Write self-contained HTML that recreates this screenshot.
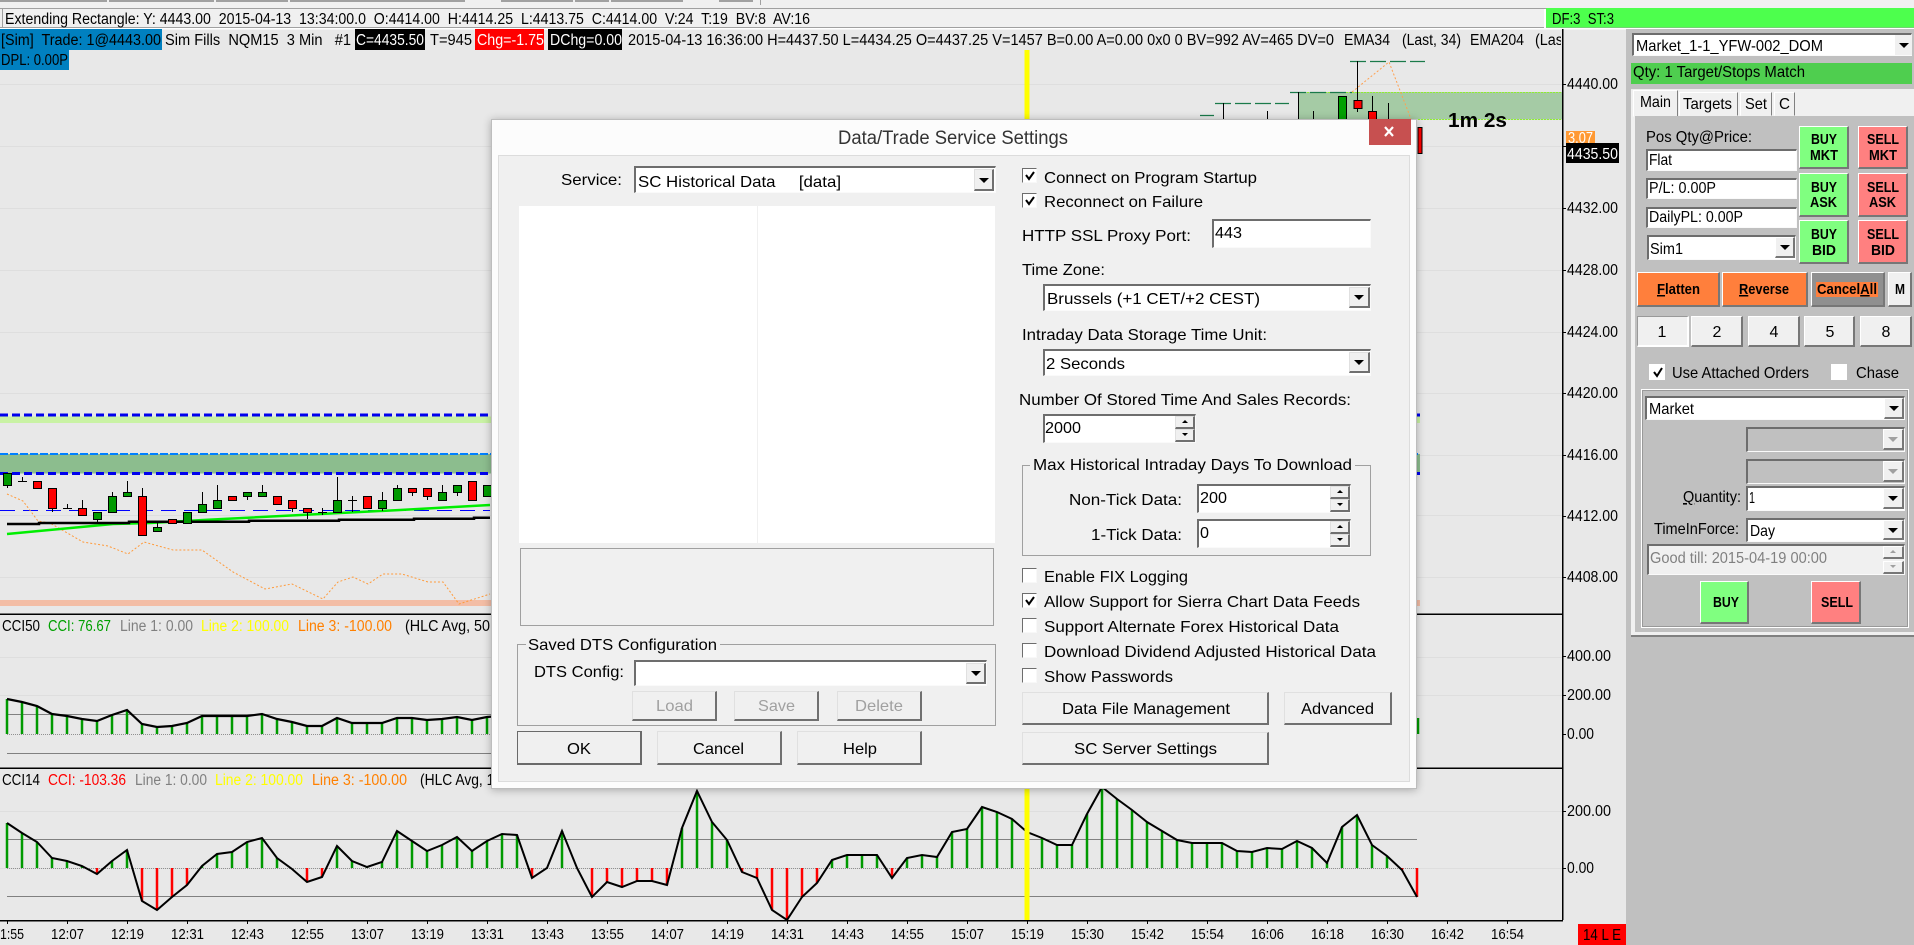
<!DOCTYPE html>
<html><head><meta charset="utf-8"><title>Data/Trade Service Settings</title>
<style>
html,body{margin:0;padding:0;width:1914px;height:945px;overflow:hidden;background:#e8e8e8;font-family:"Liberation Sans",Arial,sans-serif}
svg{position:absolute;left:0;top:0}
svg text{font-family:"Liberation Sans",Arial,sans-serif;white-space:pre}
.d{position:absolute;box-sizing:border-box}
.s{position:absolute;box-sizing:border-box;background:#fff;border-style:solid;border-width:2px 1px 1px 2px;border-color:#6d6d6d #fafafa #fafafa #6d6d6d}
.b{position:absolute;box-sizing:border-box;background:#f0f0f0;border-style:solid;border-width:1px 2px 2px 1px;border-color:#e0e0e0 #707070 #707070 #e0e0e0}
.p{position:absolute;box-sizing:border-box;background:#f0f0f0;border-style:solid;border-width:1px 2px 2px 1px;border-color:#fff #777 #777 #fff}
.a:after,.g:after{content:"";position:absolute;left:50%;top:50%;margin:-2px 0 0 -5px;border-left:5px solid transparent;border-right:5px solid transparent;border-top:5px solid #000}
.g:after{border-top-color:#a0a0a0}
.u:after,.v:after{content:"";position:absolute;left:50%;top:50%;margin:-2px 0 0 -3px;border-left:3px solid transparent;border-right:3px solid transparent}
.u:after{border-bottom:3px solid #000}
.v:after{border-top:3px solid #000}
.gr:after{border-bottom-color:#a0a0a0;border-top-color:#a0a0a0}
.c{position:absolute;box-sizing:border-box;width:15px;height:15px;background:#fff;border-style:solid;border-width:1px;border-color:#6d6d6d #f8f8f8 #f8f8f8 #6d6d6d}
.buy{background:#80ff80}.sell{background:#ff8080}
.o{background:#ff7f3c}
</style></head><body>

<svg width="1914" height="945" viewBox="0 0 1914 945">
<defs><clipPath id="cl"><rect x="0" y="29" width="1561" height="60"/></clipPath></defs>
<rect width="1914" height="945" fill="#e8e8e8"/>
<!-- top strip -->
<rect width="1914" height="8" fill="#f0f0f0"/>
<g fill="#a0a0a0"><rect x="0" width="107" height="2"/><rect x="109" width="105" height="2"/><rect x="216" width="72" height="2"/><rect x="290" width="175" height="2"/><rect x="501" width="72" height="2"/><rect x="575" width="34" height="2"/><rect x="611" width="72" height="2"/><rect x="719" width="34" height="2"/><rect x="760" width="1" height="5"/></g>
<rect x="0" y="8" width="1914" height="1" fill="#a0a0a0"/>
<rect x="0" y="9" width="1914" height="18" fill="#f0f0f0"/>
<rect x="2" y="9" width="1" height="18" fill="#a0a0a0"/>
<rect x="0" y="27" width="1914" height="1" fill="#a0a0a0"/>
<rect x="0" y="28" width="1914" height="1.5" fill="#fff"/>
<rect x="1546" y="8" width="368" height="19.5" fill="#4dff4d"/>
<rect x="1544" y="9" width="2" height="19" fill="#fff"/>
<rect x="1626" y="29" width="288" height="916" fill="#c0c0c0"/>
<!-- grid -->
<path d="M0 84.5H1562M0 146.5H1562M0 208.5H1562M0 270.5H1562M0 332.5H1562M0 393.5H1562M0 455.5H1562M0 515.5H1562M0 577.5H1562M0 657.5H1562M0 695.5H1562M0 811.5H1562M0 868.5H1562" stroke="#dedede" stroke-width="1" fill="none"/>
<!-- zones -->
<rect x="0" y="416.5" width="1420" height="6.5" fill="#c9f2a4"/>
<rect x="0" y="454" width="1420" height="19.5" fill="#8cbd8e"/>
<rect x="0" y="600" width="1420" height="6" fill="#f3bda5"/>
<path d="M0 415H1420M0 473.5H1420" stroke="#0000ee" stroke-width="3" stroke-dasharray="8 4" fill="none"/>
<path d="M0 454H1420" stroke="#0080ff" stroke-width="2" stroke-dasharray="8 2" fill="none"/>
<path d="M0 510.5H490" stroke="#0000ff" stroke-width="1" stroke-dasharray="15 8" fill="none"/>
<!-- top right band -->
<rect x="1298" y="92" width="264" height="27.5" fill="#a5cba5"/>
<path d="M1298 92.5H1562M1298 119.5H1562" stroke="#90ee30" stroke-width="1" stroke-dasharray="2 1" fill="none"/>
<path d="M1350 61.5H1425M1290 92.5H1352M1215 103.5H1289M1200 115.5H1214" stroke="#1a7a4a" stroke-width="1.3" stroke-dasharray="16 4" fill="none"/>
<path d="M1223.5 103V119M1267.5 111V119M1298.5 92V119M1313.5 111V119M1357.5 61V112M1372.5 96V119M1388.5 103V119" stroke="#000" stroke-width="1" fill="none"/>
<rect x="1338.5" y="96.5" width="8" height="24" fill="#00a000" stroke="#000"/>
<rect x="1354" y="100.5" width="8" height="8" fill="#f00" stroke="#000"/>
<rect x="1368.5" y="111.5" width="8" height="12" fill="#f00" stroke="#000"/>
<polyline points="1352,92 1389,62 1411,119" fill="none" stroke="#ffa050" stroke-width="1" stroke-dasharray="2 2"/>
<rect x="1418" y="127.5" width="4" height="26" fill="#f00" stroke="#000"/>
<!-- yellow + chart lines -->
<polyline points="7,494 23,501 38,521 50,523 83,542 108,546 128,554 144,542 173,550 202,550 233,572 265,589 292,584 323,599 338,582 353,577 368,584 383,574 402,574 428,582 443,582 459,604 490,594" fill="none" stroke="#ff9a3a" stroke-width="1" stroke-dasharray="2 2"/>
<polyline points="7,534 113,524 150,523 203,520 400,510 490,505" fill="none" stroke="#00ee00" stroke-width="2.5"/>
<path d="M7 524H39V523H129V521.7H249V520.7H339V519.7H414V518.7H474V517.7H490" fill="none" stroke="#000" stroke-width="2.5"/>
<!-- candles -->
<path d="M7.5 485V488M22.5 477V482M18 481.5H27M52.5 508V512M67.5 504V509M63 508.5H72M82.5 500V509M97.5 519V522M112.5 492V497M127.5 481V493M142.5 488V497M157.5 523V528M202.5 492V505M217.5 485V501M247.5 496V500M262.5 485V493M292.5 508V512M307.5 512V519M322.5 508V515M318 512.5H327M337.5 477V501M352.5 496V512M348 500.5H357M382.5 492V511M397.5 485V489M412.5 492V496M427.5 496V500M442.5 485V493M457.5 492V496" stroke="#000" stroke-width="1" fill="none"/>
<path d="M3.5 473.5h8v12h-8zM93.5 512.5h8v7h-8zM108.5 496.5h8v16h-8zM123.5 492.5h8v4h-8zM153.5 527.5h8v4h-8zM183.5 512.5h8v11h-8zM198.5 504.5h8v8h-8zM213.5 500.5h8v8h-8zM243.5 492.5h8v4h-8zM258.5 492.5h8v4h-8zM333.5 500.5h8v12h-8zM378.5 500.5h8v8h-8zM393.5 488.5h8v12h-8zM438.5 492.5h8v8h-8zM453.5 485.5h8v7h-8zM483.5 485.5h8v11h-8z" fill="#009a00" stroke="#000"/>
<path d="M33.5 481.5h8v7h-8zM48.5 488.5h8v20h-8zM78.5 508.5h8v7h-8zM138.5 496.5h8v39h-8zM168.5 519.5h8v4h-8zM228.5 496.5h8v4h-8zM273.5 496.5h8v8h-8zM288.5 500.5h8v8h-8zM303.5 508.5h8v4h-8zM363.5 496.5h8v12h-8zM408.5 488.5h8v4h-8zM423.5 488.5h8v8h-8zM468.5 481.5h8v19h-8z" fill="#f00" stroke="#000"/>
<!-- separators -->
<rect x="0" y="613.5" width="1562" height="1.5" fill="#000"/>
<rect x="0" y="767.5" width="1562" height="1.5" fill="#000"/>
<rect x="1562" y="29" width="1.5" height="891" fill="#000"/>
<rect x="0" y="920" width="1563" height="1.5" fill="#000"/>
<!-- CCI50 -->
<path d="M7 714.5H1417M7 753.5H1417" stroke="#808080" stroke-width="1" fill="none"/>
<path d="M7 734.5H1417" stroke="#909090" stroke-width="1" stroke-dasharray="1 1" fill="none"/>
<path d="M7 734V699M22 734V702M37 734V706M52 734V714M67 734V716M82 734V719M97 734V721M112 734V715M127 734V710M142 734V724M157 734V727M172 734V726M187 734V723M202 734V716M217 734V716M232 734V716M247 734V716M262 734V714M277 734V719M292 734V722M307 734V726M322 734V726M337 734V718M352 734V723M367 734V723M382 734V723M397 734V718M412 734V718M427 734V720M442 734V719M457 734V717M472 734V720M487 734V717M1418 734V718" stroke="#009a00" stroke-width="2.5" fill="none"/>
<polyline points="7,699 22,702 37,706 52,714 67,716 82,719 97,721 112,715 127,710 142,724 157,727 172,726 187,723 202,716 217,716 232,716 247,716 262,714 277,719 292,722 307,726 322,726 337,718 352,723 367,723 382,723 397,718 412,718 427,720 442,719 457,717 472,720 487,717 500,716" fill="none" stroke="#000" stroke-width="2.2"/>
<!-- CCI14 -->
<path d="M7 839.5H1417M7 896.5H1417" stroke="#808080" stroke-width="1" fill="none"/>
<path d="M7 868.5H1417" stroke="#909090" stroke-width="1" stroke-dasharray="1 1" fill="none"/>
<path d="M7 868V823M22 868V833M37 868V842M52 868V858M67 868V861M82 868V866M112 868V861M127 868V850M202 868V866M217 868V854M232 868V852M247 868V842M262 868V838M277 868V858M337 868V846M352 868V861M367 868V867M382 868V862M397 868V831M412 868V841M427 868V851M442 868V845M457 868V837M472 868V851M487 868V841M502 868V834M517 868V835M562 868V831M682 868V828M697 868V791M712 868V822M727 868V840M832 868V860M847 868V855M862 868V855M877 868V855M907 868V858M922 868V855M937 868V857M952 868V832M967 868V829M982 868V807M997 868V812M1012 868V819M1027 868V832M1042 868V838M1057 868V845M1072 868V845M1087 868V814M1102 868V787M1117 868V799M1132 868V810M1147 868V822M1162 868V831M1177 868V840M1192 868V843M1207 868V843M1222 868V843M1237 868V851M1252 868V852M1267 868V848M1282 868V849M1297 868V841M1312 868V848M1327 868V863M1342 868V827M1357 868V815M1372 868V845M1387 868V856" stroke="#009a00" stroke-width="2.5" fill="none"/>
<path d="M97 868V874M142 868V901M157 868V910M172 868V897M187 868V885M307 868V882M322 868V877M532 868V878M592 868V897M607 868V882M622 868V887M637 868V881M652 868V881M667 868V885M742 868V872M757 868V878M772 868V910M787 868V920M802 868V897M817 868V883M892 868V878M1402 868V870M1417 868V897" stroke="#f00" stroke-width="2.5" fill="none"/>
<polyline points="7,823 22,833 37,842 52,858 67,861 82,866 97,874 112,861 127,850 142,901 157,910 172,897 187,885 202,866 217,854 232,852 247,842 262,838 277,858 292,869 307,882 322,877 337,846 352,861 367,867 382,862 397,831 412,841 427,851 442,845 457,837 472,851 487,841 502,834 517,835 532,878 547,868 562,831 577,868 592,897 607,882 622,887 637,881 652,881 667,885 682,828 697,791 712,822 727,840 742,872 757,878 772,910 787,920 802,897 817,883 832,860 847,855 862,855 877,855 892,878 907,858 922,855 937,857 952,832 967,829 982,807 997,812 1012,819 1027,832 1042,838 1057,845 1072,845 1087,814 1102,787 1117,799 1132,810 1147,822 1162,831 1177,840 1192,843 1207,843 1222,843 1237,851 1252,852 1267,848 1282,849 1297,841 1312,848 1327,863 1342,827 1357,815 1372,845 1387,856 1402,870 1417,897" fill="none" stroke="#000" stroke-width="2"/>
<rect x="1024.5" y="50" width="5" height="870" fill="#ffff00"/>
<!-- ticks -->
<path d="M7.5 921V924M67.5 921V924M127.5 921V924M187.5 921V924M247.5 921V924M307.5 921V924M367.5 921V924M427.5 921V924M487.5 921V924M547.5 921V924M607.5 921V924M667.5 921V924M727.5 921V924M787.5 921V924M847.5 921V924M907.5 921V924M967.5 921V924M1027.5 921V924M1087.5 921V924M1147.5 921V924M1207.5 921V924M1267.5 921V924M1327.5 921V924M1387.5 921V924M1447.5 921V924M1507.5 921V924M1563 84.5H1566M1563 146.5H1566M1563 208.5H1566M1563 270.5H1566M1563 332.5H1566M1563 393.5H1566M1563 455.5H1566M1563 516.5H1566M1563 577.5H1566M1563 656.5H1566M1563 695.5H1566M1563 734.5H1566M1563 811.5H1566M1563 868.5H1566" stroke="#000" stroke-width="1"/>
<!-- header texts -->
<rect x="0" y="29" width="162" height="21" fill="#0080c0"/>
<rect x="0" y="50" width="69" height="20" fill="#0080c0"/>
<rect x="355" y="29" width="70" height="21" fill="#000"/>
<rect x="475" y="29" width="69" height="21" fill="#f00"/>
<rect x="548" y="29" width="74" height="21" fill="#000"/>
<g font-size="15.5" fill="#000">
<text x="5" y="24" textLength="805" lengthAdjust="spacingAndGlyphs">Extending Rectangle: Y: 4443.00  2015-04-13  13:34:00.0  O:4414.00  H:4414.25  L:4413.75  C:4414.00  V:24  T:19  BV:8  AV:16</text>
<text x="1552" y="24" textLength="62" lengthAdjust="spacingAndGlyphs">DF:3  ST:3</text>
<text x="1" y="45" textLength="160" lengthAdjust="spacingAndGlyphs">[Sim]  Trade: 1@4443.00</text>
<text x="165" y="45" textLength="186" lengthAdjust="spacingAndGlyphs">Sim Fills  NQM15  3 Min   #1</text>
<text x="356" y="45" textLength="68" lengthAdjust="spacingAndGlyphs" fill="#fff">C=4435.50</text>
<text x="430" y="45" textLength="42" lengthAdjust="spacingAndGlyphs">T=945</text>
<text x="477" y="45" textLength="67" lengthAdjust="spacingAndGlyphs" fill="#fff">Chg=-1.75</text>
<text x="550" y="45" textLength="72" lengthAdjust="spacingAndGlyphs" fill="#fff">DChg=0.00</text>
<text x="628" y="45" textLength="706" lengthAdjust="spacingAndGlyphs">2015-04-13 16:36:00 H=4437.50 L=4434.25 O=4437.25 V=1457 B=0.00 A=0.00 0x0 0 BV=992 AV=465 DV=0</text>
<text x="1344" y="45" textLength="46" lengthAdjust="spacingAndGlyphs">EMA34</text>
<text x="1402" y="45" textLength="59" lengthAdjust="spacingAndGlyphs">(Last, 34)</text>
<text x="1470" y="45" textLength="54" lengthAdjust="spacingAndGlyphs">EMA204</text>
<text x="1535" y="45" textLength="32" lengthAdjust="spacingAndGlyphs" clip-path="url(#cl)">(Last</text>
<text x="1" y="65" textLength="67" lengthAdjust="spacingAndGlyphs">DPL: 0.00P</text>
<!-- study labels -->
<text x="2" y="631" textLength="38" lengthAdjust="spacingAndGlyphs">CCI50</text>
<text x="48" y="631" textLength="63" lengthAdjust="spacingAndGlyphs" fill="#00a000">CCI: 76.67</text>
<text x="120" y="631" textLength="73" lengthAdjust="spacingAndGlyphs" fill="#808080">Line 1: 0.00</text>
<text x="201" y="631" textLength="88" lengthAdjust="spacingAndGlyphs" fill="#ffff00">Line 2: 100.00</text>
<text x="298" y="631" textLength="94" lengthAdjust="spacingAndGlyphs" fill="#ff8000">Line 3: -100.00</text>
<text x="405" y="631" textLength="85" lengthAdjust="spacingAndGlyphs">(HLC Avg, 50</text>
<text x="2" y="785" textLength="38" lengthAdjust="spacingAndGlyphs">CCI14</text>
<text x="48" y="785" textLength="78" lengthAdjust="spacingAndGlyphs" fill="#f00">CCI: -103.36</text>
<text x="135" y="785" textLength="72" lengthAdjust="spacingAndGlyphs" fill="#808080">Line 1: 0.00</text>
<text x="215" y="785" textLength="88" lengthAdjust="spacingAndGlyphs" fill="#ffff00">Line 2: 100.00</text>
<text x="312" y="785" textLength="95" lengthAdjust="spacingAndGlyphs" fill="#ff8000">Line 3: -100.00</text>
<text x="420" y="785" textLength="82" lengthAdjust="spacingAndGlyphs">(HLC Avg, 14</text>
<!-- axis -->
<text x="1567" y="89" textLength="51" lengthAdjust="spacingAndGlyphs">4440.00</text>
<text x="1567" y="213" textLength="51" lengthAdjust="spacingAndGlyphs">4432.00</text>
<text x="1567" y="275" textLength="51" lengthAdjust="spacingAndGlyphs">4428.00</text>
<text x="1567" y="337" textLength="51" lengthAdjust="spacingAndGlyphs">4424.00</text>
<text x="1567" y="398" textLength="51" lengthAdjust="spacingAndGlyphs">4420.00</text>
<text x="1567" y="460" textLength="51" lengthAdjust="spacingAndGlyphs">4416.00</text>
<text x="1567" y="521" textLength="51" lengthAdjust="spacingAndGlyphs">4412.00</text>
<text x="1567" y="582" textLength="51" lengthAdjust="spacingAndGlyphs">4408.00</text>
<text x="1567" y="661" textLength="44" lengthAdjust="spacingAndGlyphs">400.00</text>
<text x="1567" y="700" textLength="44" lengthAdjust="spacingAndGlyphs">200.00</text>
<text x="1567" y="739" textLength="27" lengthAdjust="spacingAndGlyphs">0.00</text>
<text x="1567" y="816" textLength="44" lengthAdjust="spacingAndGlyphs">200.00</text>
<text x="1567" y="873" textLength="27" lengthAdjust="spacingAndGlyphs">0.00</text>
</g>
<rect x="1566" y="131" width="29" height="13" fill="#ff9933"/>
<text x="1568" y="143" font-size="15.5" fill="#fff" textLength="25" lengthAdjust="spacingAndGlyphs">3.07</text>
<rect x="1566" y="143" width="53" height="20" fill="#000"/>
<text x="1567" y="159" font-size="15.5" fill="#fff" textLength="51" lengthAdjust="spacingAndGlyphs">4435.50</text>
<text x="1448" y="127" font-size="20" font-weight="bold" fill="#000" textLength="59" lengthAdjust="spacingAndGlyphs">1m 2s</text>
<!-- time axis -->
<g font-size="15" fill="#000">
<text x="0" y="939" textLength="24" lengthAdjust="spacingAndGlyphs">1:55</text>
<text x="51" y="939" textLength="33" lengthAdjust="spacingAndGlyphs">12:07</text>
<text x="111" y="939" textLength="33" lengthAdjust="spacingAndGlyphs">12:19</text>
<text x="171" y="939" textLength="33" lengthAdjust="spacingAndGlyphs">12:31</text>
<text x="231" y="939" textLength="33" lengthAdjust="spacingAndGlyphs">12:43</text>
<text x="291" y="939" textLength="33" lengthAdjust="spacingAndGlyphs">12:55</text>
<text x="351" y="939" textLength="33" lengthAdjust="spacingAndGlyphs">13:07</text>
<text x="411" y="939" textLength="33" lengthAdjust="spacingAndGlyphs">13:19</text>
<text x="471" y="939" textLength="33" lengthAdjust="spacingAndGlyphs">13:31</text>
<text x="531" y="939" textLength="33" lengthAdjust="spacingAndGlyphs">13:43</text>
<text x="591" y="939" textLength="33" lengthAdjust="spacingAndGlyphs">13:55</text>
<text x="651" y="939" textLength="33" lengthAdjust="spacingAndGlyphs">14:07</text>
<text x="711" y="939" textLength="33" lengthAdjust="spacingAndGlyphs">14:19</text>
<text x="771" y="939" textLength="33" lengthAdjust="spacingAndGlyphs">14:31</text>
<text x="831" y="939" textLength="33" lengthAdjust="spacingAndGlyphs">14:43</text>
<text x="891" y="939" textLength="33" lengthAdjust="spacingAndGlyphs">14:55</text>
<text x="951" y="939" textLength="33" lengthAdjust="spacingAndGlyphs">15:07</text>
<text x="1011" y="939" textLength="33" lengthAdjust="spacingAndGlyphs">15:19</text>
<text x="1071" y="939" textLength="33" lengthAdjust="spacingAndGlyphs">15:30</text>
<text x="1131" y="939" textLength="33" lengthAdjust="spacingAndGlyphs">15:42</text>
<text x="1191" y="939" textLength="33" lengthAdjust="spacingAndGlyphs">15:54</text>
<text x="1251" y="939" textLength="33" lengthAdjust="spacingAndGlyphs">16:06</text>
<text x="1311" y="939" textLength="33" lengthAdjust="spacingAndGlyphs">16:18</text>
<text x="1371" y="939" textLength="33" lengthAdjust="spacingAndGlyphs">16:30</text>
<text x="1431" y="939" textLength="33" lengthAdjust="spacingAndGlyphs">16:42</text>
<text x="1491" y="939" textLength="33" lengthAdjust="spacingAndGlyphs">16:54</text>
</g>
<rect x="1578" y="924" width="48" height="21" fill="#f00"/>
<text x="1583" y="940" font-size="15.5" fill="#000" textLength="38" lengthAdjust="spacingAndGlyphs">14 L E</text>
</svg>

<!-- DIALOG -->
<div class="d" style="left:491px;top:119px;width:926px;height:670px;background:#fcfcfc;border:1px solid #bdbdbd;box-shadow:0 1px 8px rgba(0,0,0,.28)"></div>
<div class="d" style="left:1369px;top:119px;width:42px;height:26px;background:#c75050"></div>
<div class="d" style="left:498px;top:155px;width:912px;height:627px;background:#f0f0f0;border:1px solid #dcdcdc"></div>
<div class="s" style="left:634px;top:166px;width:362px;height:27px"></div>
<div class="b a" style="left:974px;top:169px;width:20px;height:22px"></div>
<div class="d" style="left:519px;top:206px;width:476px;height:337px;background:#fff"></div>
<div class="d" style="left:757px;top:206px;width:1px;height:337px;background:#f0f0f0"></div>
<div class="d" style="left:520px;top:548px;width:474px;height:78px;border:1px solid #a0a0a0"></div>
<div class="d" style="left:517px;top:644px;width:479px;height:82px;border:1px solid #a0a0a0"></div>
<div class="d" style="left:526px;top:640px;width:194px;height:10px;background:#f0f0f0"></div>
<div class="s" style="left:634px;top:660px;width:353px;height:26px"></div>
<div class="b a" style="left:966px;top:663px;width:20px;height:21px"></div>
<div class="b" style="left:632px;top:691px;width:85px;height:30px"></div>
<div class="b" style="left:734px;top:691px;width:85px;height:30px"></div>
<div class="b" style="left:837px;top:691px;width:85px;height:30px"></div>
<div class="b" style="left:517px;top:731px;width:125px;height:34px;border-width:1px 2px 2px 1px;border-color:#6a6a6a"></div>
<div class="b" style="left:657px;top:731px;width:125px;height:34px"></div>
<div class="b" style="left:797px;top:731px;width:125px;height:34px"></div>
<div class="c" style="left:1022px;top:168px"></div>
<div class="c" style="left:1022px;top:193px"></div>
<div class="s" style="left:1212px;top:219px;width:159px;height:29px"></div>
<div class="s" style="left:1043px;top:284px;width:328px;height:27px"></div>
<div class="b a" style="left:1349px;top:287px;width:21px;height:21px"></div>
<div class="s" style="left:1043px;top:349px;width:328px;height:27px"></div>
<div class="b a" style="left:1349px;top:352px;width:21px;height:21px"></div>
<div class="s" style="left:1043px;top:414px;width:153px;height:29px"></div>
<div class="b u" style="left:1175px;top:416px;width:20px;height:13px"></div>
<div class="b v" style="left:1175px;top:429px;width:20px;height:13px"></div>
<div class="d" style="left:1022px;top:465px;width:349px;height:91px;border:1px solid #a0a0a0"></div>
<div class="d" style="left:1030px;top:460px;width:325px;height:10px;background:#f0f0f0"></div>
<div class="s" style="left:1197px;top:484px;width:154px;height:29px"></div>
<div class="b u" style="left:1330px;top:486px;width:20px;height:13px"></div>
<div class="b v" style="left:1330px;top:499px;width:20px;height:13px"></div>
<div class="s" style="left:1197px;top:519px;width:154px;height:29px"></div>
<div class="b u" style="left:1330px;top:521px;width:20px;height:13px"></div>
<div class="b v" style="left:1330px;top:534px;width:20px;height:13px"></div>
<div class="c" style="left:1022px;top:568px"></div>
<div class="c" style="left:1022px;top:593px"></div>
<div class="c" style="left:1022px;top:618px"></div>
<div class="c" style="left:1022px;top:643px"></div>
<div class="c" style="left:1022px;top:668px"></div>
<div class="b" style="left:1022px;top:692px;width:247px;height:33px"></div>
<div class="b" style="left:1284px;top:692px;width:108px;height:33px"></div>
<div class="b" style="left:1022px;top:732px;width:247px;height:33px"></div>

<!-- RIGHT PANEL -->
<div class="s" style="left:1632px;top:33px;width:280px;height:23px"></div>
<div class="d a" style="left:1895px;top:35px;width:17px;height:20px;background:#f0f0f0"></div>
<div class="d" style="left:1631px;top:63px;width:281px;height:21px;background:#4fce4f"></div>
<div class="d" style="left:1631px;top:89px;width:283px;height:548px;background:#f0f0f0;border-bottom:2px solid #808080"></div>
<div class="d" style="left:1633px;top:90px;width:45px;height:27px;background:#f0f0f0;border:1px solid;border-color:#fff #808080 #f0f0f0 #fff"></div>
<div class="d" style="left:1679px;top:92px;width:59px;height:24px;background:#f0f0f0;border:1px solid;border-color:#fff #808080 #f0f0f0 #fff"></div>
<div class="d" style="left:1740px;top:92px;width:32px;height:24px;background:#f0f0f0;border:1px solid;border-color:#fff #808080 #f0f0f0 #fff"></div>
<div class="d" style="left:1774px;top:92px;width:21px;height:24px;background:#f0f0f0;border:1px solid;border-color:#fff #808080 #f0f0f0 #fff"></div>
<div class="d" style="left:1635px;top:116px;width:279px;height:516px;background:#c0c0c0"></div>
<div class="s" style="left:1646px;top:149px;width:151px;height:22px"></div>
<div class="s" style="left:1646px;top:178px;width:151px;height:21px"></div>
<div class="s" style="left:1646px;top:207px;width:151px;height:21px"></div>
<div class="s" style="left:1647px;top:235px;width:149px;height:25px"></div>
<div class="p a" style="left:1775px;top:237px;width:20px;height:21px"></div>
<div class="p buy" style="left:1799px;top:126px;width:50px;height:43px"></div>
<div class="p sell" style="left:1858px;top:126px;width:50px;height:43px"></div>
<div class="p buy" style="left:1799px;top:173px;width:50px;height:44px"></div>
<div class="p sell" style="left:1858px;top:173px;width:50px;height:44px"></div>
<div class="p buy" style="left:1799px;top:220px;width:50px;height:44px"></div>
<div class="p sell" style="left:1858px;top:220px;width:50px;height:44px"></div>
<div class="p o" style="left:1637px;top:272px;width:83px;height:35px"></div>
<div class="p o" style="left:1722px;top:272px;width:86px;height:35px"></div>
<div class="p" style="left:1811px;top:272px;width:74px;height:35px;background:#909090"></div>
<div class="d o" style="left:1816px;top:282px;width:62px;height:15px"></div>
<div class="p" style="left:1888px;top:272px;width:24px;height:35px"></div>
<div class="p" style="left:1637px;top:316px;width:52px;height:31px;border-color:#999 #fff #fff #999"></div>
<div class="p" style="left:1691px;top:316px;width:52px;height:31px"></div>
<div class="p" style="left:1748px;top:316px;width:52px;height:31px"></div>
<div class="p" style="left:1804px;top:316px;width:51px;height:31px"></div>
<div class="p" style="left:1860px;top:316px;width:52px;height:31px"></div>
<div class="c" style="left:1649px;top:364px;width:16px;height:16px;border-color:#fff"></div>
<div class="c" style="left:1831px;top:364px;width:16px;height:16px;border-color:#fff"></div>
<div class="d" style="left:1641px;top:389px;width:268px;height:239px;border:1px solid #fff;outline:1px solid #999;outline-offset:-2px"></div>
<div class="s" style="left:1645px;top:396px;width:260px;height:24px"></div>
<div class="p a" style="left:1884px;top:398px;width:20px;height:21px"></div>
<div class="s" style="left:1746px;top:427px;width:159px;height:25px;background:#c0c0c0"></div>
<div class="p g" style="left:1883px;top:429px;width:21px;height:21px"></div>
<div class="s" style="left:1746px;top:459px;width:159px;height:25px;background:#c0c0c0"></div>
<div class="p g" style="left:1883px;top:461px;width:21px;height:21px"></div>
<div class="s" style="left:1746px;top:486px;width:159px;height:25px"></div>
<div class="p a" style="left:1883px;top:488px;width:21px;height:21px"></div>
<div class="s" style="left:1746px;top:518px;width:159px;height:24px"></div>
<div class="p a" style="left:1883px;top:520px;width:21px;height:20px"></div>
<div class="s" style="left:1647px;top:544px;width:258px;height:31px;background:#f0f0f0"></div>
<div class="p u gr" style="left:1883px;top:546px;width:21px;height:13px"></div>
<div class="p v gr" style="left:1883px;top:561px;width:21px;height:13px"></div>
<div class="p buy" style="left:1700px;top:581px;width:49px;height:43px"></div>
<div class="p sell" style="left:1811px;top:581px;width:50px;height:43px"></div>

<!-- TEXT OVERLAY -->
<svg width="1914" height="945" viewBox="0 0 1914 945" style="pointer-events:none">
<path d="M1385 127L1393 136M1393 127L1385 136" stroke="#fff" stroke-width="2.2" fill="none"/>
<g fill="none" stroke="#000" stroke-width="2">
<polyline points="1026,175 1029,179 1034,172"/>
<polyline points="1026,200 1029,204 1034,197"/>
<polyline points="1026,600 1029,604 1034,597"/>
<polyline points="1654,372 1657,376 1662,368"/>
</g>
<text x="838" y="144" font-size="19" fill="#333" textLength="230" lengthAdjust="spacingAndGlyphs">Data/Trade Service Settings</text>
<g font-size="16" fill="#000">
<text x="561" y="185" textLength="61" lengthAdjust="spacingAndGlyphs">Service:</text>
<text x="638" y="187" textLength="203" lengthAdjust="spacingAndGlyphs">SC Historical Data     [data]</text>
<text x="1044" y="183" textLength="213" lengthAdjust="spacingAndGlyphs">Connect on Program Startup</text>
<text x="1044" y="207" textLength="159" lengthAdjust="spacingAndGlyphs">Reconnect on Failure</text>
<text x="1022" y="241" textLength="169" lengthAdjust="spacingAndGlyphs">HTTP SSL Proxy Port:</text>
<text x="1215" y="238" textLength="27" lengthAdjust="spacingAndGlyphs">443</text>
<text x="1022" y="275" textLength="83" lengthAdjust="spacingAndGlyphs">Time Zone:</text>
<text x="1047" y="304" textLength="213" lengthAdjust="spacingAndGlyphs">Brussels (+1 CET/+2 CEST)</text>
<text x="1022" y="340" textLength="245" lengthAdjust="spacingAndGlyphs">Intraday Data Storage Time Unit:</text>
<text x="1046" y="369" textLength="79" lengthAdjust="spacingAndGlyphs">2 Seconds</text>
<text x="1019" y="405" textLength="332" lengthAdjust="spacingAndGlyphs">Number Of Stored Time And Sales Records:</text>
<text x="1045" y="433" textLength="36" lengthAdjust="spacingAndGlyphs">2000</text>
<text x="1033" y="470" textLength="319" lengthAdjust="spacingAndGlyphs">Max Historical Intraday Days To Download</text>
<text x="1069" y="505" textLength="113" lengthAdjust="spacingAndGlyphs">Non-Tick Data:</text>
<text x="1200" y="503" textLength="27" lengthAdjust="spacingAndGlyphs">200</text>
<text x="1091" y="540" textLength="91" lengthAdjust="spacingAndGlyphs">1-Tick Data:</text>
<text x="1200" y="538" textLength="9" lengthAdjust="spacingAndGlyphs">0</text>
<text x="1044" y="582" textLength="144" lengthAdjust="spacingAndGlyphs">Enable FIX Logging</text>
<text x="1044" y="607" textLength="316" lengthAdjust="spacingAndGlyphs">Allow Support for Sierra Chart Data Feeds</text>
<text x="1044" y="632" textLength="295" lengthAdjust="spacingAndGlyphs">Support Alternate Forex Historical Data</text>
<text x="1044" y="657" textLength="332" lengthAdjust="spacingAndGlyphs">Download Dividend Adjusted Historical Data</text>
<text x="1044" y="682" textLength="129" lengthAdjust="spacingAndGlyphs">Show Passwords</text>
<text x="1062" y="714" textLength="168" lengthAdjust="spacingAndGlyphs">Data File Management</text>
<text x="1301" y="714" textLength="73" lengthAdjust="spacingAndGlyphs">Advanced</text>
<text x="1074" y="754" textLength="143" lengthAdjust="spacingAndGlyphs">SC Server Settings</text>
<text x="528" y="650" textLength="189" lengthAdjust="spacingAndGlyphs">Saved DTS Configuration</text>
<text x="534" y="677" textLength="90" lengthAdjust="spacingAndGlyphs">DTS Config:</text>
<text x="656" y="711" textLength="37" lengthAdjust="spacingAndGlyphs" fill="#a0a0a0">Load</text>
<text x="758" y="711" textLength="37" lengthAdjust="spacingAndGlyphs" fill="#a0a0a0">Save</text>
<text x="855" y="711" textLength="48" lengthAdjust="spacingAndGlyphs" fill="#a0a0a0">Delete</text>
<text x="567" y="754" textLength="24" lengthAdjust="spacingAndGlyphs">OK</text>
<text x="693" y="754" textLength="51" lengthAdjust="spacingAndGlyphs">Cancel</text>
<text x="843" y="754" textLength="34" lengthAdjust="spacingAndGlyphs">Help</text>
<!-- panel -->
<text x="1636" y="51" textLength="187" lengthAdjust="spacingAndGlyphs">Market_1-1_YFW-002_DOM</text>
<text x="1633" y="77" textLength="172" lengthAdjust="spacingAndGlyphs">Qty: 1 Target/Stops Match</text>
<text x="1640" y="107" textLength="31" lengthAdjust="spacingAndGlyphs">Main</text>
<text x="1683" y="109" textLength="49" lengthAdjust="spacingAndGlyphs">Targets</text>
<text x="1745" y="109" textLength="22" lengthAdjust="spacingAndGlyphs">Set</text>
<text x="1779" y="109" textLength="11" lengthAdjust="spacingAndGlyphs">C</text>
<text x="1646" y="142" textLength="106" lengthAdjust="spacingAndGlyphs">Pos Qty@Price:</text>
<text x="1649" y="165" textLength="23" lengthAdjust="spacingAndGlyphs">Flat</text>
<text x="1649" y="193" textLength="67" lengthAdjust="spacingAndGlyphs">P/L: 0.00P</text>
<text x="1649" y="222" textLength="94" lengthAdjust="spacingAndGlyphs">DailyPL: 0.00P</text>
<text x="1650" y="254" textLength="33" lengthAdjust="spacingAndGlyphs">Sim1</text>
<text x="1662" y="337" text-anchor="middle">1</text>
<text x="1717" y="337" text-anchor="middle">2</text>
<text x="1774" y="337" text-anchor="middle">4</text>
<text x="1830" y="337" text-anchor="middle">5</text>
<text x="1886" y="337" text-anchor="middle">8</text>
<text x="1672" y="378" textLength="137" lengthAdjust="spacingAndGlyphs">Use Attached Orders</text>
<text x="1856" y="378" textLength="43" lengthAdjust="spacingAndGlyphs">Chase</text>
<text x="1649" y="414" textLength="45" lengthAdjust="spacingAndGlyphs">Market</text>
<text x="1683" y="502" textLength="58" lengthAdjust="spacingAndGlyphs"><tspan text-decoration="underline">Q</tspan>uantity:</text>
<text x="1749" y="503" textLength="6" lengthAdjust="spacingAndGlyphs">1</text>
<text x="1654" y="534" textLength="85" lengthAdjust="spacingAndGlyphs">TimeInForce:</text>
<text x="1750" y="536" textLength="25" lengthAdjust="spacingAndGlyphs">Day</text>
<text x="1650" y="563" textLength="177" lengthAdjust="spacingAndGlyphs" fill="#808080">Good till: 2015-04-19 00:00</text>
</g>
<g font-size="15" font-weight="bold" fill="#000">
<text x="1811" y="144" textLength="26" lengthAdjust="spacingAndGlyphs">BUY</text>
<text x="1810" y="160" textLength="28" lengthAdjust="spacingAndGlyphs">MKT</text>
<text x="1867" y="144" textLength="32" lengthAdjust="spacingAndGlyphs">SELL</text>
<text x="1869" y="160" textLength="28" lengthAdjust="spacingAndGlyphs">MKT</text>
<text x="1811" y="192" textLength="26" lengthAdjust="spacingAndGlyphs">BUY</text>
<text x="1810" y="207" textLength="27" lengthAdjust="spacingAndGlyphs">ASK</text>
<text x="1867" y="192" textLength="32" lengthAdjust="spacingAndGlyphs">SELL</text>
<text x="1869" y="207" textLength="27" lengthAdjust="spacingAndGlyphs">ASK</text>
<text x="1811" y="239" textLength="26" lengthAdjust="spacingAndGlyphs">BUY</text>
<text x="1812" y="255" textLength="24" lengthAdjust="spacingAndGlyphs">BID</text>
<text x="1867" y="239" textLength="32" lengthAdjust="spacingAndGlyphs">SELL</text>
<text x="1871" y="255" textLength="24" lengthAdjust="spacingAndGlyphs">BID</text>
<text x="1657" y="294" textLength="43" lengthAdjust="spacingAndGlyphs"><tspan text-decoration="underline">F</tspan>latten</text>
<text x="1739" y="294" textLength="50" lengthAdjust="spacingAndGlyphs"><tspan text-decoration="underline">R</tspan>everse</text>
<text x="1817" y="294" textLength="60" lengthAdjust="spacingAndGlyphs">Cancel<tspan text-decoration="underline">A</tspan>ll</text>
<text x="1895" y="294" textLength="10" lengthAdjust="spacingAndGlyphs">M</text>
<text x="1713" y="607" textLength="26" lengthAdjust="spacingAndGlyphs">BUY</text>
<text x="1821" y="607" textLength="32" lengthAdjust="spacingAndGlyphs">SELL</text>
</g>
</svg>
</body></html>
